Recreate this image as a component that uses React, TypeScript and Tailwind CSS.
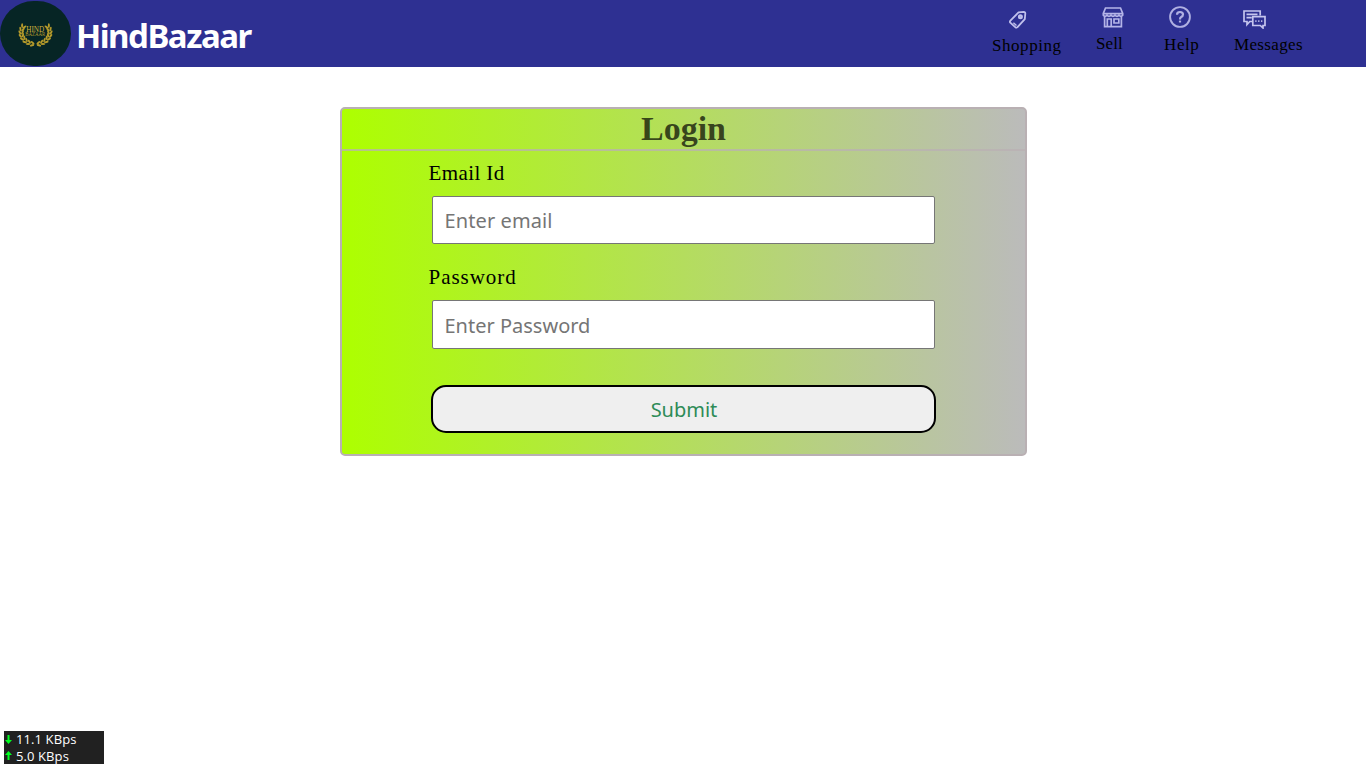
import type { ReactNode } from 'react';

const serif = "font-['Palatino_Linotype','Liberation_Serif',serif]";
const comic = "font-['Comic_Sans_MS','Noto_Sans',sans-serif]";

const leaves = [0, 1, 2, 3, 4, 5, 6, 7];

function Logo() {
  const branch = leaves.map((i) => {
    const a = ((102 + i * 15.5) * Math.PI) / 180;
    const x = 35.5 + Math.cos(a) * 14.3;
    const y = 32.5 + Math.sin(a) * 11.8;
    const deg = 192 + i * 15.5;
    return (
      <g key={i} transform={`translate(${x} ${y}) rotate(${deg})`}>
        <ellipse cx="0.8" cy="-1.1" rx="2.3" ry="1" transform="rotate(-28)" />
        <ellipse cx="0.8" cy="1.1" rx="2.3" ry="1" transform="rotate(28)" />
      </g>
    );
  });
  return (
    <svg width="71" height="67" viewBox="0 0 71 67" className="shrink-0">
      <rect width="71" height="65" y="1" rx="34" ry="32.5" fill="#062525" />
      <g fill="#b49a2b">{branch}</g>
      <g fill="#b49a2b" transform="translate(71 0) scale(-1 1)">{branch}</g>
      <text x="35.2" y="31.8" textAnchor="middle" fontSize="8" textLength="18" lengthAdjust="spacingAndGlyphs" fill="#d0b33c" fontFamily="Liberation Serif, serif">HIND</text>
      <text x="35.2" y="36.2" textAnchor="middle" fontSize="5.4" textLength="20" lengthAdjust="spacingAndGlyphs" fill="#b49a2b" fontFamily="Liberation Serif, serif">BAZAAR</text>
    </svg>
  );
}

function TagIcon() {
  return (
    <svg width="18" height="18" viewBox="0 0 18 18" fill="none" stroke="#c0c0ec" strokeWidth="1.8" strokeLinejoin="round">
      <path d="M9.5 1.4 14.8.9Q16.4.9 16.3 2.5L15.8 8.2 8.5 16.2Q7.4 17.2 6.2 16.1L1.3 11.6Q.5 10.6 1.4 9.7Z" />
      <path d="M4.4 11.8 7.5 14.6" strokeWidth="1.4" />
      <circle cx="11.4" cy="5.8" r="1.6" fill="#aaaae5" />
    </svg>
  );
}

function StoreIcon() {
  return (
    <svg width="22" height="21" viewBox="0 0 22 21" fill="none" stroke="#b4b4e8" strokeWidth="1.7">
      <path d="M3.5 1H18.5L20.7 6.5V8.3Q19 10.5 17 8.3 15 10.5 13 8.3 11 10.5 9 8.3 7 10.5 5 8.3 3 10.5 1.3 8.3V6.5ZM1.3 6.6H20.7M2.6 9.5V19.7H19.4V9.5M5.3 19V12H9.2V19M12 12H16.8V16H12Z" />
    </svg>
  );
}

function HelpIcon() {
  return (
    <svg width="22" height="22" viewBox="0 0 22 22" fill="none" stroke="#b0b0e2" strokeWidth="1.9">
      <circle cx="11" cy="11" r="9.9" />
      <path d="M8 8.7Q8 6 11 6 14 6 14 8.6 14 10.2 12.2 11 11 11.6 11 13.4" strokeWidth="2.2" />
      <path d="M11 14.6V16.5" strokeWidth="2.2" />
    </svg>
  );
}

function ChatIcon() {
  return (
    <svg width="23" height="19" viewBox="0 0 23 19" fill="none" stroke="#c4c4ee" strokeWidth="1.7">
      <path d="M9 11.5H6.8L4 14.5V11.5H1V1H17.2V5.5M3.5 4.3H14.5M3.5 7.7H8.8" />
      <path d="M9.8 6.7H22V15.5H20V18L17.3 15.5H9.8Z" />
      <path d="M12.3 11.2H13.5M15.2 11.2H16.4M18.1 11.2H19.3" />
    </svg>
  );
}

function NavItem({ label, width, icon, className }: { label: string; width: string; icon: ReactNode; className: string }) {
  return (
    <a className={`flex shrink-0 flex-col ${width} ${className}`}>
      {icon}
      <span className="whitespace-nowrap">{label}</span>
    </a>
  );
}

export default function App() {
  return (
    <div className={`flex h-screen flex-col overflow-hidden bg-white text-black ${serif}`}>
      <header className="flex h-[67px] shrink-0 items-start bg-[#2e3092]">
        <Logo />
        <h1 className={`ml-[5px] mt-[12px] text-[33px] leading-[48px] font-bold tracking-[-1.5px] text-white ${comic}`}>HindBazaar</h1>
        <nav className="ml-auto mr-[63px] flex items-start text-[17px] leading-[20px]">
          <NavItem label="Shopping" width="w-[104px]" className="gap-[7px] pt-[11px] tracking-[0.55px] [&>svg]:ml-[17px]" icon={<TagIcon />} />
          <NavItem label="Sell" width="w-[68px]" className="gap-[6px] pt-[7px] tracking-[0.1px] [&>svg]:ml-[6px]" icon={<StoreIcon />} />
          <NavItem label="Help" width="w-[70px]" className="gap-[7px] pt-[6px] tracking-[0.6px] [&>svg]:ml-[5px]" icon={<HelpIcon />} />
          <NavItem label="Messages" width="w-[69px]" className="gap-[6px] pt-[10px] tracking-[0.35px] [&>svg]:ml-[9px]" icon={<ChatIcon />} />
        </nav>
      </header>

      <main className="flex-1 pt-[40px]">
        <form className="mx-auto h-[349px] w-[687px] rounded-[5px] border-2 border-[#b9b0b3] bg-linear-to-r/srgb from-[#adff00] to-[#bbbbbb]" onSubmit={(e) => e.preventDefault()}>
          <h2 className="h-[42px] border-b-2 border-[#b9b0b3]/75 pl-px text-center text-[34px] leading-[39px] font-bold text-black/70">Login</h2>
          <div className="flex flex-col px-[86px]">
            <label htmlFor="email" className="mt-[9px] h-[36px] pl-px text-[21px] leading-[27px] tracking-[0.4px]">Email Id</label>
            <input id="email" type="email" placeholder="Enter email" className={`ml-1 h-[48px] w-[503px] rounded-[2px] border border-[#767676] bg-white px-[12px] text-[20px] tracking-[0.1px] placeholder:text-[#757575] ${comic}`} />
            <label htmlFor="password" className="mt-[20px] h-[36px] pl-px text-[21px] leading-[27px] tracking-[0.95px]">Password</label>
            <input id="password" type="password" placeholder="Enter Password" className={`ml-1 h-[49px] w-[503px] rounded-[2px] border border-[#767676] bg-white px-[12px] pt-[2px] text-[20px] placeholder:text-[#757575] ${comic}`} />
            <button className={`mt-[36px] ml-[3px] h-[48px] w-[505px] rounded-[15px] border-2 border-black bg-[#efefef] pt-[2px] pl-[2px] text-[20px] text-[#2e8b57] ${comic}`}>Submit</button>
          </div>
        </form>
      </main>

      <aside className="mb-1 ml-1 flex h-[33px] w-[100px] shrink-0 flex-col bg-[#212121] pl-px font-['Open_Sans',sans-serif] text-[13px] leading-[16.5px] tracking-[0.1px] text-white">
        <div className="flex items-center gap-[4px]">
          <svg width="7" height="9" viewBox="0 0 7 9" fill="#00ff20"><path d="M2.5 0h2v5H7L3.5 9 0 5h2.5Z" /></svg>
          <span>11.1 KBps</span>
        </div>
        <div className="flex items-center gap-[4px]">
          <svg width="7" height="9" viewBox="0 0 7 9" fill="#00ff20"><path d="M2.5 9h2V4H7L3.5 0 0 4h2.5Z" /></svg>
          <span>5.0 KBps</span>
        </div>
      </aside>
    </div>
  );
}
